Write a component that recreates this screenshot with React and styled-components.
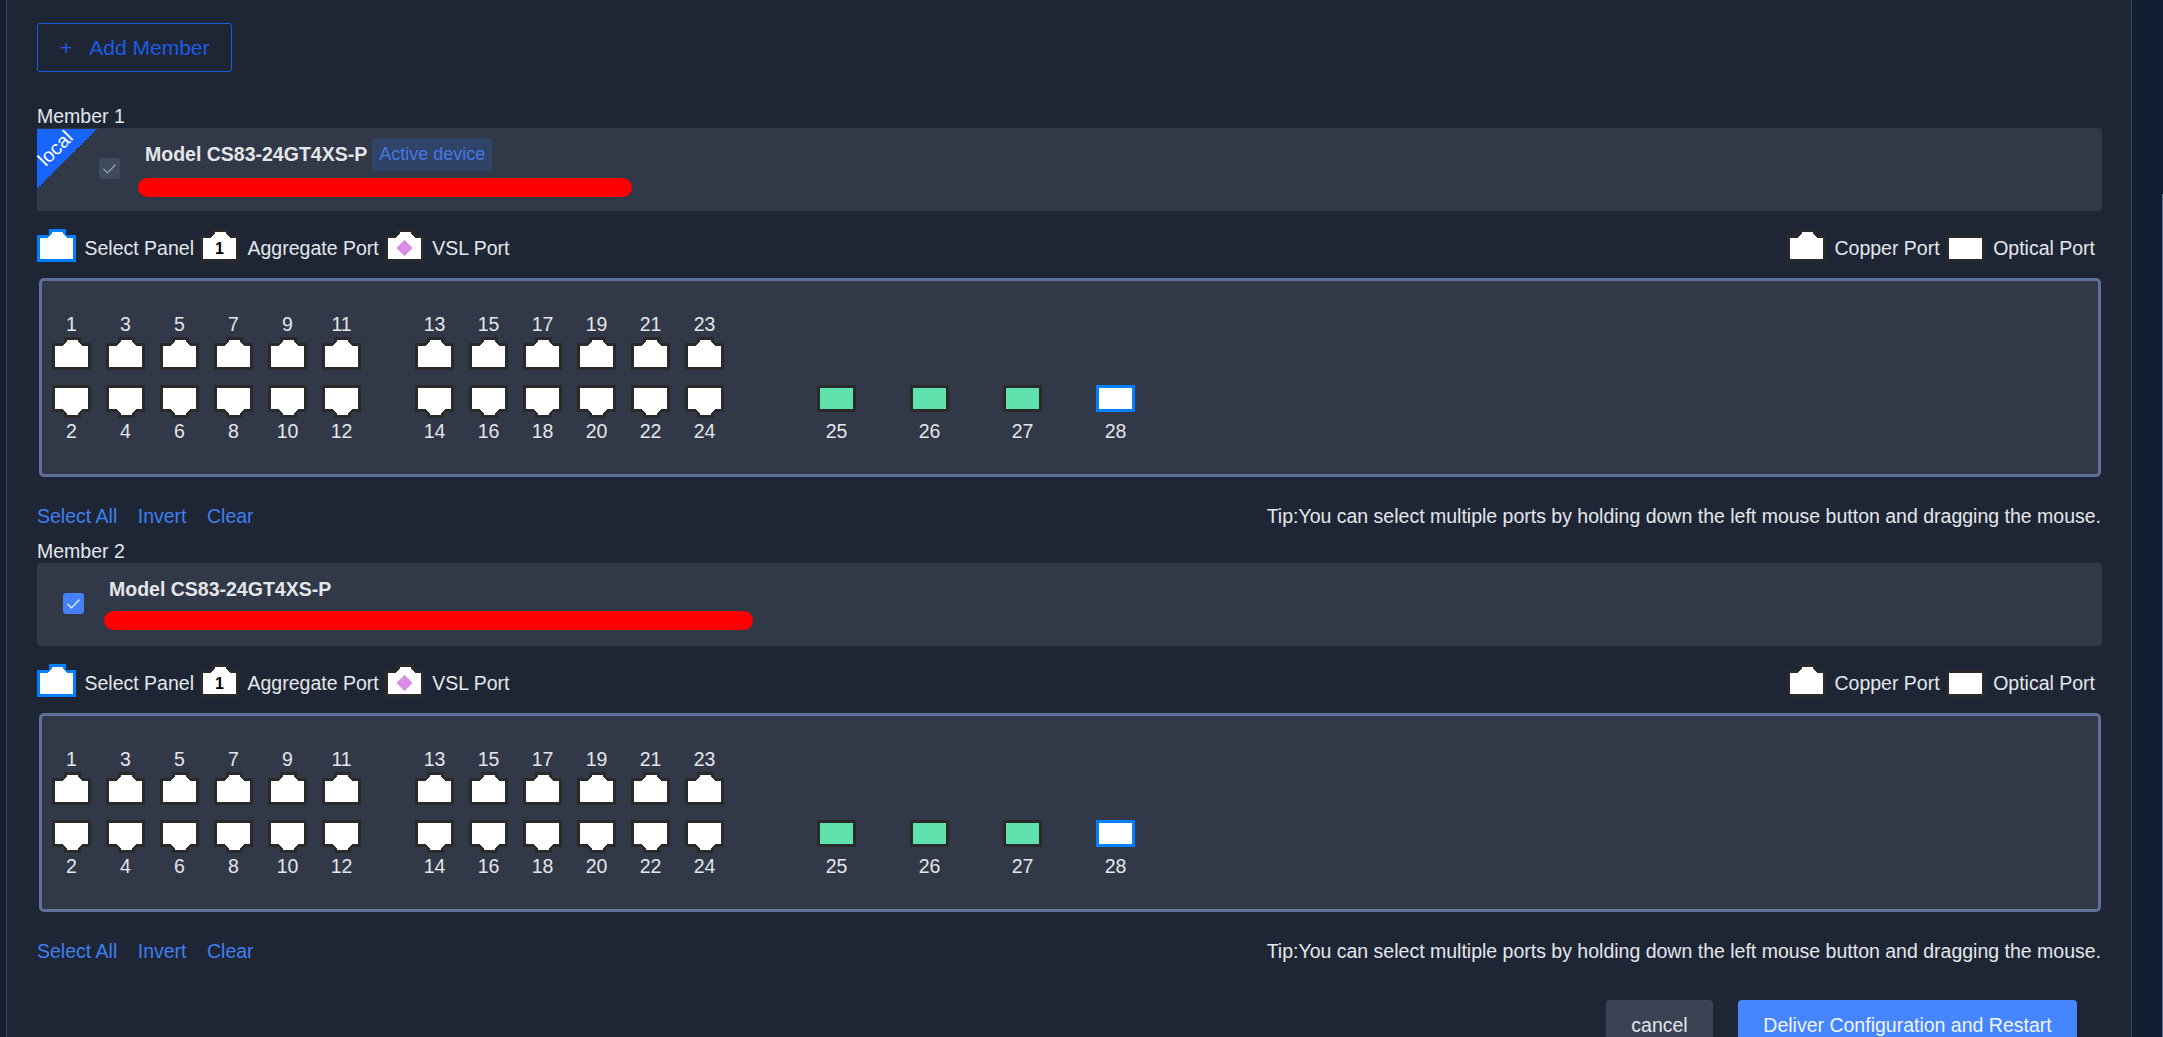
import React from 'react';
import styled, { createGlobalStyle } from 'styled-components';

const GlobalStyle = createGlobalStyle`
  html, body {
    margin: 0;
    height: 100%;
    overflow: hidden;
    background: #121f33;
    font-family: "Liberation Sans", Arial, sans-serif;
  }
  * { box-sizing: border-box; }
`;

const Page = styled.div`
  display: flex;
  height: 1037px;
  overflow: hidden;
  background: #121f33;
`;

const Gutter = styled.div`
  width: 6px;
  flex: none;
`;

const RightGutter = styled.div`
  flex: 1;
  display: flex;
  justify-content: flex-end;
  padding-top: 194px;
`;

const ScrollEdge = styled.div`
  width: 1px;
  background: #5b6a86;
`;

const Main = styled.main`
  width: 2126px;
  flex: none;
  background: #1e2636;
  border-left: 1px solid #3a4558;
  border-right: 1px solid #3a4558;
  padding: 23px 29px 0 30px;
`;

const AddButton = styled.button`
  width: 195px;
  height: 49px;
  display: flex;
  align-items: center;
  gap: 17px;
  padding: 0 0 0 22px;
  background: transparent;
  border: 1px solid #1d5ce0;
  border-radius: 3px;
  color: #1d5ce0;
  font: 21px/1 "Liberation Sans", Arial, sans-serif;
`;

const Member = styled.section`
  margin-top: ${({ $first }) => ($first ? '32px' : '11px')};
`;

const MemberTitle = styled.div`
  height: 24px;
  line-height: 24px;
  font-size: 19.5px;
  color: #e4e6ea;
`;

const InfoBar = styled.div`
  position: relative;
  height: 83px;
  background: #313847;
  border-radius: ${({ $local }) => ($local ? '0 4px 4px 0' : '4px')};
  display: flex;
  align-items: center;
`;

const Ribbon = styled.div`
  position: absolute;
  left: 0;
  top: 1px;
  width: 60px;
  height: 60px;
  background: linear-gradient(135deg, #1764ff 50%, transparent 50%);
`;

const RibbonText = styled.span`
  position: absolute;
  left: -7px;
  top: 7px;
  width: 50px;
  text-align: center;
  color: #fff;
  font-size: 19.5px;
  line-height: 24px;
  transform: rotate(-45deg);
`;

const CheckBox = styled.span`
  flex: none;
  width: 21px;
  height: 21px;
  margin-left: ${({ $disabled }) => ($disabled ? '62px' : '26px')};
  margin-top: -2px;
  border-radius: 3px;
  background: ${({ $disabled }) => ($disabled ? '#3e4a5e' : '#4680f5')};
  display: flex;
  align-items: center;
  justify-content: center;
`;

const InfoBody = styled.div`
  align-self: flex-start;
  margin-left: 25px;
  padding-top: 10px;
  display: flex;
  flex-direction: column;
`;

const ModelRow = styled.div`
  display: flex;
  align-items: center;
  gap: 5px;
  height: 33px;
`;

const ModelName = styled.span`
  font-size: 19.5px;
  font-weight: 700;
  color: #e4e6ea;
`;

const ActiveTag = styled.span`
  height: 33px;
  line-height: 33px;
  padding: 0 7px;
  border-radius: 3px;
  background: #2f4268;
  color: #4279e4;
  font-size: 18px;
`;

const Redaction = styled.div`
  width: ${({ $width }) => $width}px;
  height: 19px;
  margin-top: ${({ $gap }) => $gap}px;
  margin-left: ${({ $shift }) => $shift}px;
  border-radius: 10px;
  background: #ff0000;
`;

const LegendRow = styled.div`
  display: flex;
  justify-content: space-between;
  align-items: flex-end;
  height: 33px;
  margin-top: 18px;
  padding-right: 1px;
`;

const LegendGroup = styled.div`
  display: flex;
  align-items: flex-end;
`;

const LegendText = styled.span`
  margin: 0 6px 3px 8.5px;
  font-size: 19.5px;
  line-height: 22px;
  color: #e4e6ea;
  white-space: nowrap;
`;

const PortPanel = styled.div`
  height: 199px;
  margin: 16px 1px 0 2px;
  padding: 30px 10px;
  background: #313847;
  border: 3px solid #5f7199;
  border-radius: 5px;
  display: flex;
  gap: 54px;
`;

const PortGroup = styled.div`
  display: flex;
  gap: ${({ $wide }) => ($wide ? '54px' : '15px')};
  margin-left: ${({ $wide }) => ($wide ? '39px' : '0')};
`;

const PortColumn = styled.div`
  width: 39px;
  display: flex;
  flex-direction: column;
  align-items: center;
`;

const PortNumber = styled.div`
  height: 26px;
  line-height: 26px;
  font-size: 19.5px;
  color: #e4e6ea;
  white-space: nowrap;
`;

const PortSlot = styled.div`
  width: 39px;
  height: 33px;
  margin-top: ${({ $lower }) => ($lower ? '15px' : '0')};
  display: flex;
  align-items: flex-start;
`;

const BottomRow = styled.div`
  display: flex;
  justify-content: space-between;
  align-items: center;
  height: 24px;
  margin: 27px 1px 0 0;
`;

const LinkGroup = styled.div`
  display: flex;
  gap: 20.5px;
`;

const TextLink = styled.a`
  font-size: 19.5px;
  color: #3f7fee;
  cursor: pointer;
`;

const Tip = styled.span`
  font-size: 19.5px;
  color: #e4e6ea;
`;

const Actions = styled.div`
  display: flex;
  justify-content: flex-end;
  gap: 25px;
  margin: 37px 25px 0 0;
`;

const ActionButton = styled.button`
  height: 50px;
  padding: 0;
  width: ${({ $primary }) => ($primary ? '339px' : '107px')};
  border: none;
  border-radius: 4px;
  background: ${({ $primary }) => ($primary ? '#4586ff' : '#3a4353')};
  color: ${({ $primary }) => ($primary ? '#f0f4ff' : '#e4e6ea')};
  font: 19.5px "Liberation Sans", Arial, sans-serif;
`;

const TAB_OUTER = '0,6 12,6 12,0 29,0 29,6 39,6 39,33 0,33';
const TAB_INNER = '3,9 11,9 13,6 15,5 15,3 26,3 26,5 28,6 30,9 36,9 36,30 3,30';

const PortIcon = ({ flip, border = '#2a2a2a', children }) => (
  <svg width="39" height="33" viewBox="0 0 39 33" shapeRendering="crispEdges">
    <g transform={flip ? 'matrix(1 0 0 -1 0 33)' : undefined}>
      <polygon points={TAB_OUTER} fill={border} />
      <polygon points={TAB_INNER} fill="#fff" />
    </g>
    {children}
  </svg>
);

const OpticalIcon = ({ fill = '#fff', border = '#2a2a2a' }) => (
  <svg width="39" height="27" viewBox="0 0 39 27" shapeRendering="crispEdges">
    <rect width="39" height="27" fill={border} />
    <rect x="3" y="3" width="33" height="21" fill={fill} />
  </svg>
);

const Check = ({ color }) => (
  <svg width="15" height="15" viewBox="0 0 15 15" fill="none">
    <path d="M1.5 8 L5.5 12 L13.5 3.5" stroke={color} strokeWidth="1.2" />
  </svg>
);

const groupA = [1, 3, 5, 7, 9, 11];
const groupB = [13, 15, 17, 19, 21, 23];
const fibers = [25, 26, 27, 28];

const CopperPair = ({ n }) => (
  <PortColumn>
    <PortNumber>{n}</PortNumber>
    <PortSlot><PortIcon /></PortSlot>
    <PortSlot $lower><PortIcon flip /></PortSlot>
    <PortNumber>{n + 1}</PortNumber>
  </PortColumn>
);

const FiberPort = ({ n }) => (
  <PortColumn>
    <PortNumber />
    <PortSlot />
    <PortSlot $lower>
      {n === 28 ? <OpticalIcon border="#007fff" /> : <OpticalIcon fill="#60e0ac" />}
    </PortSlot>
    <PortNumber>{n}</PortNumber>
  </PortColumn>
);

const MemberBlock = ({ first, title, local, redactWidth, redactShift, redactGap }) => (
  <Member $first={first}>
    <MemberTitle>{title}</MemberTitle>
    <InfoBar $local={local}>
      {local && (
        <Ribbon>
          <RibbonText>local</RibbonText>
        </Ribbon>
      )}
      <CheckBox $disabled={local}>
        <Check color={local ? '#9aa3b2' : '#e8eeff'} />
      </CheckBox>
      <InfoBody>
        <ModelRow>
          <ModelName>Model CS83-24GT4XS-P</ModelName>
          {local && <ActiveTag>Active device</ActiveTag>}
        </ModelRow>
        <Redaction $width={redactWidth} $shift={redactShift} $gap={redactGap} />
      </InfoBody>
    </InfoBar>

    <LegendRow>
      <LegendGroup>
        <PortIcon border="#007fff" />
        <LegendText>Select Panel</LegendText>
        <PortIcon>
          <text x="19.5" y="25" textAnchor="middle" fontSize="16" fontWeight="700" fill="#000" fontFamily="Liberation Sans">1</text>
        </PortIcon>
        <LegendText>Aggregate Port</LegendText>
        <PortIcon>
          <polygon points="19.5,11 27,19 19.5,27 12,19" fill="#dc8ce8" />
        </PortIcon>
        <LegendText>VSL Port</LegendText>
      </LegendGroup>
      <LegendGroup>
        <PortIcon />
        <LegendText>Copper Port</LegendText>
        <OpticalIcon />
        <LegendText>Optical Port</LegendText>
      </LegendGroup>
    </LegendRow>

    <PortPanel>
      <PortGroup>
        {groupA.map((n) => <CopperPair key={n} n={n} />)}
      </PortGroup>
      <PortGroup>
        {groupB.map((n) => <CopperPair key={n} n={n} />)}
      </PortGroup>
      <PortGroup $wide>
        {fibers.map((n) => <FiberPort key={n} n={n} />)}
      </PortGroup>
    </PortPanel>

    <BottomRow>
      <LinkGroup>
        <TextLink>Select All</TextLink>
        <TextLink>Invert</TextLink>
        <TextLink>Clear</TextLink>
      </LinkGroup>
      <Tip>Tip:You can select multiple ports by holding down the left mouse button and dragging the mouse.</Tip>
    </BottomRow>
  </Member>
);

export default function App() {
  return (
    <Page>
      <GlobalStyle />
      <Gutter />
      <Main>
        <AddButton>
          <span>+</span>
          <span>Add Member</span>
        </AddButton>
        <MemberBlock first local title="Member 1" redactWidth={494} redactShift={-7} redactGap={7} />
        <MemberBlock title="Member 2" redactWidth={649} redactShift={-5} redactGap={5} />
        <Actions>
          <ActionButton>cancel</ActionButton>
          <ActionButton $primary>Deliver Configuration and Restart</ActionButton>
        </Actions>
      </Main>
      <RightGutter>
        <ScrollEdge />
      </RightGutter>
    </Page>
  );
}
